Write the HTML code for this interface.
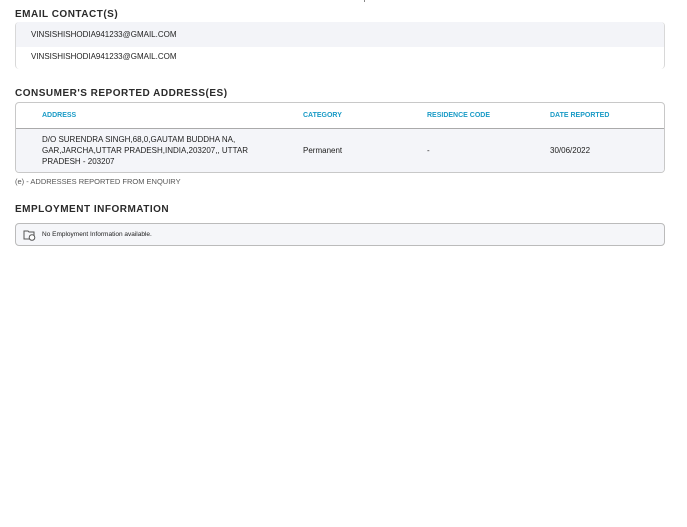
<!DOCTYPE html>
<html><head><style>
body{margin:0;width:687px;height:527px;background:#fff;font-family:"Liberation Sans",sans-serif;color:#222;position:relative;overflow:hidden}
.h{position:absolute;left:15px;font-size:10px;font-weight:bold;letter-spacing:0.5px;color:#2a2a2a}
.box{position:absolute;left:15px;width:648px;border:1px solid #d8d8d8;border-radius:4px;overflow:hidden}
.t{position:absolute;font-size:8px;color:#1e1e1e}
.c{color:#1a9bc6;font-weight:bold;font-size:7px;position:absolute;top:9px}
</style></head><body>
<div style="position:absolute;left:364px;top:0;width:1px;height:2px;background:#888"></div>
<div class="h" style="top:9px">EMAIL CONTACT(S)</div>
<div class="box" style="top:22px;height:47px;border-top:none;border-bottom:none">
<div style="position:absolute;left:0;top:0;width:100%;height:25px;background:#f3f4f8"></div>
<div class="t" style="left:15px;top:8px">VINSISHISHODIA941233@GMAIL.COM</div>
<div class="t" style="left:15px;top:30px">VINSISHISHODIA941233@GMAIL.COM</div>
</div>
<div class="h" style="top:88px">CONSUMER'S REPORTED ADDRESS(ES)</div>
<div class="box" style="top:102px;height:69px;border-color:#c8c8c8">
<div style="position:absolute;left:0;top:25px;width:100%;height:44px;background:#f4f5f9;border-top:1px solid #aaa"></div>
<div class="c" style="left:26px">ADDRESS</div>
<div class="c" style="left:287px">CATEGORY</div>
<div class="c" style="left:411px">RESIDENCE CODE</div>
<div class="c" style="left:534px">DATE REPORTED</div>
<div class="t" style="left:26px;top:31px;line-height:11px">D/O SURENDRA SINGH,68,0,GAUTAM BUDDHA NA,<br>GAR,JARCHA,UTTAR PRADESH,INDIA,203207,, UTTAR<br>PRADESH - 203207</div>
<div class="t" style="left:287px;top:43px">Permanent</div>
<div class="t" style="left:411px;top:43px">-</div>
<div class="t" style="left:534px;top:43px">30/06/2022</div>
</div>
<div class="t" style="left:15px;top:177px;color:#555;font-size:7.5px">(e) - ADDRESSES REPORTED FROM ENQUIRY</div>
<div class="h" style="top:204px">EMPLOYMENT INFORMATION</div>
<div class="box" style="top:223px;height:21px;background:#f5f6f9;border-color:#bbb">
<svg style="position:absolute;left:7px;top:5px" width="13" height="12" viewBox="0 0 13 12"><path d="M1 2h4l1 1h5v7H1z" fill="none" stroke="#555"/><circle cx="9" cy="8.5" r="2.8" fill="#fff" stroke="#555"/></svg>
<div class="t" style="left:26px;top:7px;font-size:6.5px">No Employment Information available.</div>
</div>
</body></html>
